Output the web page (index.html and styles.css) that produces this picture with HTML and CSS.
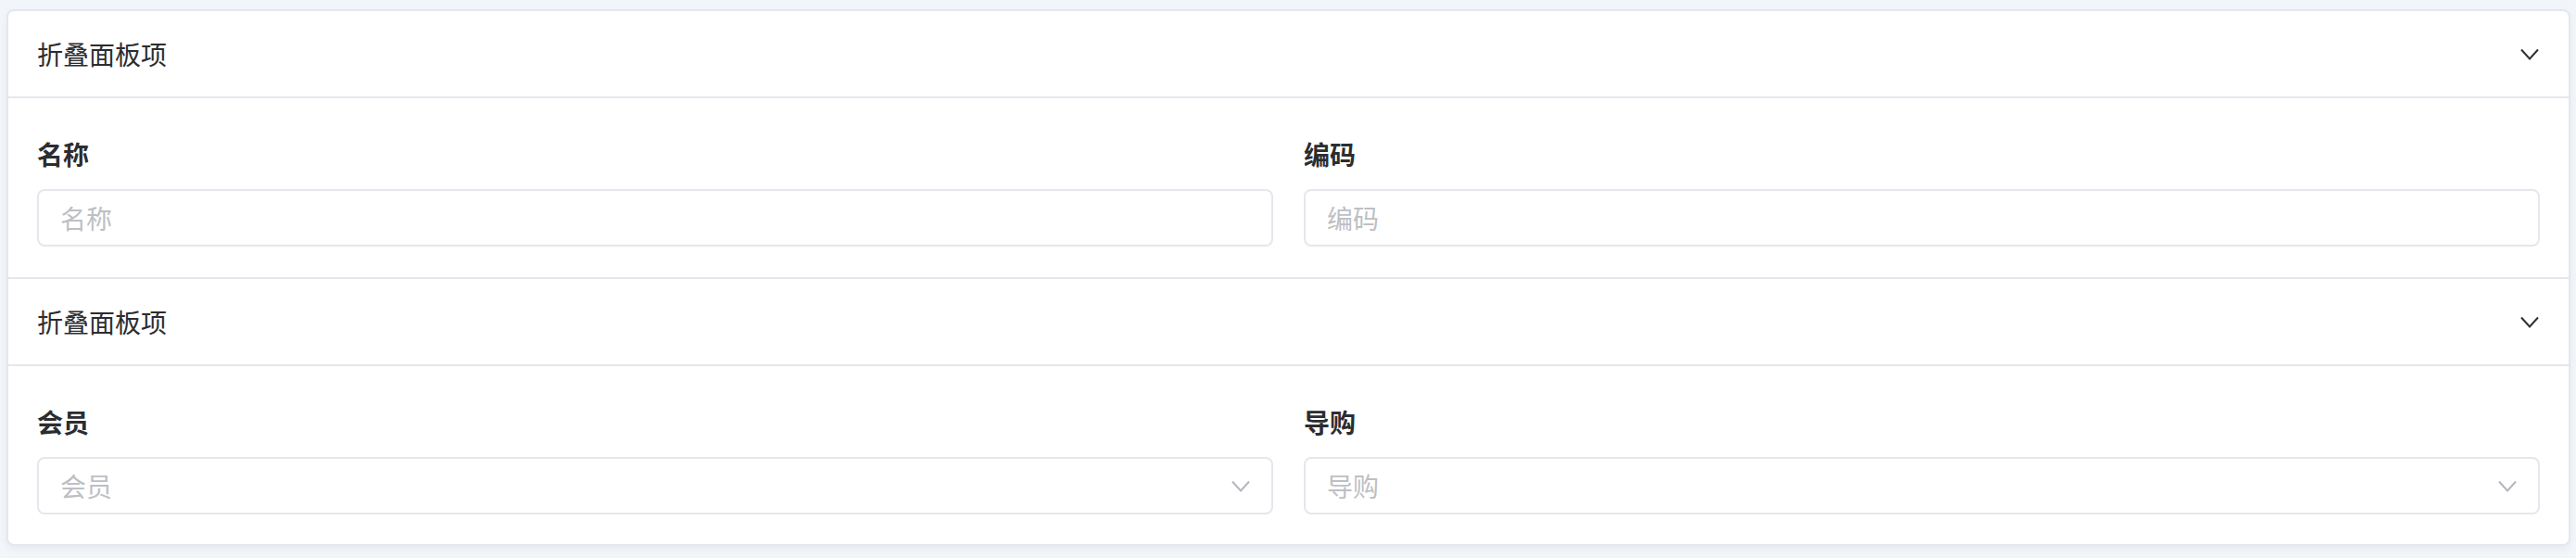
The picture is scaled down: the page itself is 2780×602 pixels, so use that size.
FILE: index.html
```html
<!DOCTYPE html>
<html lang="zh-CN">
<head>
<meta charset="utf-8">
<title>折叠面板</title>
<link rel="stylesheet" href="styles.css">
</head>
<body>
<div class="card">
  <div class="item">
    <div class="header">
      <span class="title">折叠面板项</span>
      <svg class="arrow" viewBox="0 0 20 13" width="20" height="13"><path d="M1 1.5 L10 11.5 L19 1.5" fill="none" stroke="#303133" stroke-width="2"/></svg>
    </div>
    <div class="body">
      <div class="field">
        <div class="label">名称</div>
        <div class="input"><span class="ph">名称</span></div>
      </div>
      <div class="field">
        <div class="label">编码</div>
        <div class="input"><span class="ph">编码</span></div>
      </div>
    </div>
  </div>
  <div class="item last">
    <div class="header">
      <span class="title">折叠面板项</span>
      <svg class="arrow" viewBox="0 0 20 13" width="20" height="13"><path d="M1 1.5 L10 11.5 L19 1.5" fill="none" stroke="#303133" stroke-width="2"/></svg>
    </div>
    <div class="body">
      <div class="field">
        <div class="label">会员</div>
        <div class="input select"><span class="ph">会员</span>
          <svg class="sarrow" viewBox="0 0 20 13" width="20" height="13"><path d="M1 1.5 L10 11.5 L19 1.5" fill="none" stroke="#b4b7bd" stroke-width="2"/></svg>
        </div>
      </div>
      <div class="field">
        <div class="label">导购</div>
        <div class="input select"><span class="ph">导购</span>
          <svg class="sarrow" viewBox="0 0 20 13" width="20" height="13"><path d="M1 1.5 L10 11.5 L19 1.5" fill="none" stroke="#b4b7bd" stroke-width="2"/></svg>
        </div>
      </div>
    </div>
  </div>
</div>
</body>
</html>
```

FILE: styles.css
```css
html, body {
  margin: 0;
  padding: 0;
  background: #f2f5f9;
}
body {
  padding: 10px 6px 14px 7px;
  font-family: "Noto Sans CJK SC", "Noto Sans", sans-serif;
  color: #303133;
}
.card {
  background: #ffffff;
  border: 2px solid #e4e7ed;
  border-radius: 8px;
  box-shadow: 0 3px 8px rgba(0, 0, 0, 0.05);
  overflow: hidden;
}
.header {
  height: 92px;
  display: flex;
  align-items: center;
  justify-content: space-between;
  padding: 0 32px 0 31px;
  border-bottom: 2px solid #e4e7ed;
}
.title {
  font-size: 28px;
  line-height: 40px;
  color: #2b2d30;
}
.arrow {
  display: block;
}
.body {
  display: grid;
  grid-template-columns: 1fr 1fr;
  column-gap: 33px;
  padding: 40px 31px 33px 31px;
  border-bottom: 2px solid #e4e7ed;
}
.item.last .body {
  border-bottom: none;
  padding-bottom: 32px;
}
.label {
  font-size: 28px;
  line-height: 40px;
  font-weight: 700;
  color: #2b2d30;
  margin-bottom: 18px;
}
.input {
  box-sizing: border-box;
  height: 62px;
  border: 2px solid #e4e7ed;
  border-radius: 8px;
  display: flex;
  align-items: center;
  justify-content: space-between;
  padding: 0 23px 0 23px;
}
.ph {
  font-size: 28px;
  line-height: 40px;
  color: #bdbfc4;
}
.sarrow {
  display: block;
}
```
